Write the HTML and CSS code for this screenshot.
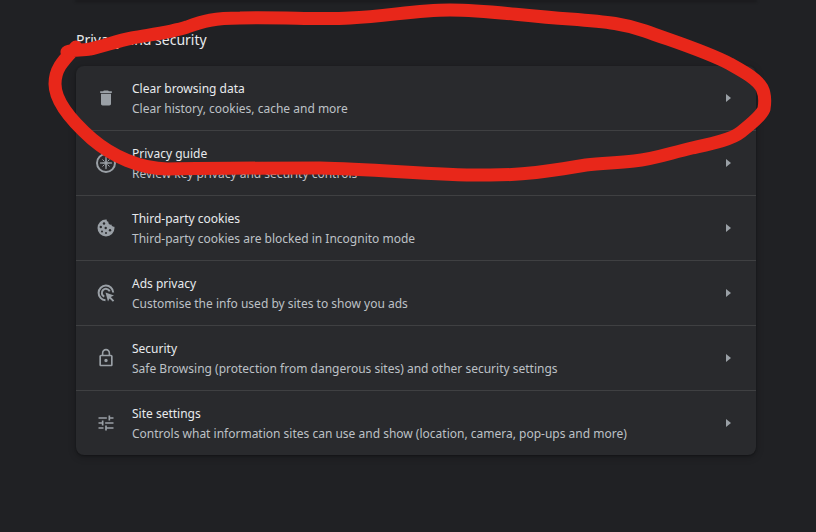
FILE: index.html
```
<!DOCTYPE html>
<html lang="en">
	<head>
		<meta charset="utf-8">
		<title>Settings - Privacy and security</title>
		<meta name="viewport" content="width=device-width,initial-scale=1">
		<link rel="stylesheet" href="styles.css">
	</head>
	<body>
		<div class="previous"></div>
		<main class="section">
			<h2 class="title">Privacy and security</h2>
			<ul class="card">
				<li>
					<a class="row" href="#clear">
						<svg class="icon" viewBox="0 0 24 24"><path d="M6 19c0 1.100.9 2 2 2h8c1.100 0 2-.9 2-2V7H6v12zM19 4h-3.500l-1-1h-5l-1 1H5v2h14V4z"/></svg>
						<span class="text"><span class="name">Clear browsing data</span><span class="info">Clear history, cookies, cache and more</span></span>
						<span class="arrow"></span>
					</a>
				</li>
				<li>
					<a class="row" href="#guide">
						<svg class="icon" viewBox="0 0 20 20"><circle class="line" cx="10" cy="10" r="9"/><path d="M10 3l.8 6.200L17 10l-6.200.8L10 17l-.8-6.200L3 10l6.200-.8z"/><path class="thin" d="M10 4v12M4 10h12M6.500 6.500l2 2M11.500 11.500l2 2M13.500 6.500l-2 2M8.500 11.500l-2 2"/></svg>
						<span class="text"><span class="name">Privacy guide</span><span class="info">Review key privacy and security controls</span></span>
						<span class="arrow"></span>
					</a>
				</li>
				<li>
					<a class="row" href="#cookies">
						<svg class="icon" viewBox="0 0 20 20"><path d="M10 1.500a8.500 8.500 0 1 0 8.500 8.500c0-.5 0-.9-.1-1.300-1.400.4-2.900-.5-3-2.100-2 .3-3.400-1.100-3-2.900C11 3.500 10.500 2.500 10.700 1.500z"/><g class="dots"><circle cx="8" cy="5.500" r="1.200"/><circle cx="4.800" cy="9" r="1.200"/><circle cx="9.700" cy="10" r="1.200"/><circle cx="6" cy="13.500" r="1"/><circle cx="10" cy="15" r="1"/><circle cx="14" cy="12.300" r="1.200"/></g></svg>
						<span class="text"><span class="name">Third-party cookies</span><span class="info">Third-party cookies are blocked in Incognito mode</span></span>
						<span class="arrow"></span>
					</a>
				</li>
				<li>
					<a class="row" href="#ads">
						<svg class="icon" viewBox="0 0 20 20"><path class="line" d="M9.500 17.200A7.300 7.300 0 1 1 17.200 9.500M8.300 13.700A4.100 4.100 0 1 1 13.700 8.300"/><path d="M9.500 9.500l8.500 3-3.200 1.600 3.400 3.400-1.300 1.300-3.400-3.400-1.500 3.100z"/></svg>
						<span class="text"><span class="name">Ads privacy</span><span class="info">Customise the info used by sites to show you ads</span></span>
						<span class="arrow"></span>
					</a>
				</li>
				<li>
					<a class="row" href="#security">
						<svg class="icon" viewBox="0 0 24 24"><path d="M12 17c1.100 0 2-.9 2-2s-.9-2-2-2-2 .9-2 2 .9 2 2 2zm6-9h-1V6c0-2.760-2.240-5-5-5S7 3.240 7 6v2H6c-1.100 0-2 .9-2 2v10c0 1.100.9 2 2 2h12c1.100 0 2-.9 2-2V10c0-1.100-.9-2-2-2zM8.900 6c0-1.710 1.390-3.100 3.100-3.100s3.100 1.390 3.100 3.100v2H8.900V6zM18 20H6V10h12v10z"/></svg>
						<span class="text"><span class="name">Security</span><span class="info">Safe Browsing (protection from dangerous sites) and other security settings</span></span>
						<span class="arrow"></span>
					</a>
				</li>
				<li>
					<a class="row" href="#site">
						<svg class="icon" viewBox="0 0 24 24"><path d="M3 17v2h6v-2H3zM3 5v2h10V5H3zm10 16v-2h8v-2h-8v-2h-2v6h2zM7 9v2H3v2h4v2h2V9H7zm14 4v-2H11v2h10zm-6-4h2V7h4V5h-4V3h-2v6z"/></svg>
						<span class="text"><span class="name">Site settings</span><span class="info">Controls what information sites can use and show (location, camera, pop-ups and more)</span></span>
						<span class="arrow"></span>
					</a>
				</li>
			</ul>
		</main>
		<!-- hand-drawn marker round the first row -->
		<svg class="marker" viewBox="0 0 816 200" aria-hidden="true">
			<path d="M67 52C74 49 82 51 90 49C102 47 116 41 132 38C155 34 172 32 187 27C203 21 215 18 240 18C285 17 320 20 350 18C390 16 415 10 450 10C490 10 520 16 570 19C610 22 625 24 645 31C675 42 705 51 730 64C746 73 757 79 762 88C766 96 765 103 764 109C761 116 751 124 741 132C731 140 710 144 692 148C670 153 655 159 634 161C615 163 602 163 586 165C555 170 530 175 490 175C440 176 380 169 320 168C265 168 220 168 168 169C140 169 112 156 92 139C75 124 55 103 55 84C55 68 64 60 76 47"/>
		</svg>
	</body>
</html>
```
FILE: styles.css
```
html,body,ul,li,h2{margin: 0; padding: 0;}
ul,li{list-style: none;}
body{
	position: relative;
	background: #202124;
	color: #e8eaed;
	font-family: "Segoe UI", "Noto Sans", sans-serif;
	font-size: 12px;
	line-height: 20px;
}
.previous{
	height: 0;
	margin: 0 60px 0 76px;
	box-shadow: 0 1px 3px 1px rgba(0,0,0,.3);
}
.section{
	margin: 0 60px 0 76px;
	padding: 30px 0;
}
.title{
	margin-bottom: 16px;
	font-size: 14px;
	font-weight: 400;
}
.card{
	background: #292a2d;
	border-radius: 8px;
	box-shadow: 0 1px 2px rgba(0,0,0,.3), 0 2px 6px 2px rgba(0,0,0,.15);
}
.card li+li{
	border-top: 1px solid #3f4042;
}
.row{
	display: flex;
	align-items: center;
	min-height: 64px;
	padding: 0 20px;
	color: inherit;
	text-decoration: none;
}
.icon{
	flex: none;
	width: 20px;
	height: 20px;
	margin-right: 16px;
	fill: #9aa0a6;
}
.icon .line,.icon .thin{
	fill: none;
	stroke: #9aa0a6;
	stroke-width: 2;
}
.icon .thin{
	stroke-width: 1;
}
.icon .dots{
	fill: #292a2d;
}
.text{
	flex: 1;
	padding-top: 2px;
}
.name,.info{
	display: block;
}
.info{
	color: #bdc1c6;
}
.arrow{
	margin-right: 5px;
	border: 4px solid transparent;
	border-left: 5px solid #9aa0a6;
	border-right: 0;
}
.marker{
	position: absolute;
	top: 0;
	left: 0;
	width: 100%;
	fill: none;
	stroke: #e8271a;
	stroke-width: 13;
	stroke-linecap: round;
	stroke-linejoin: round;
	pointer-events: none;
}
```
